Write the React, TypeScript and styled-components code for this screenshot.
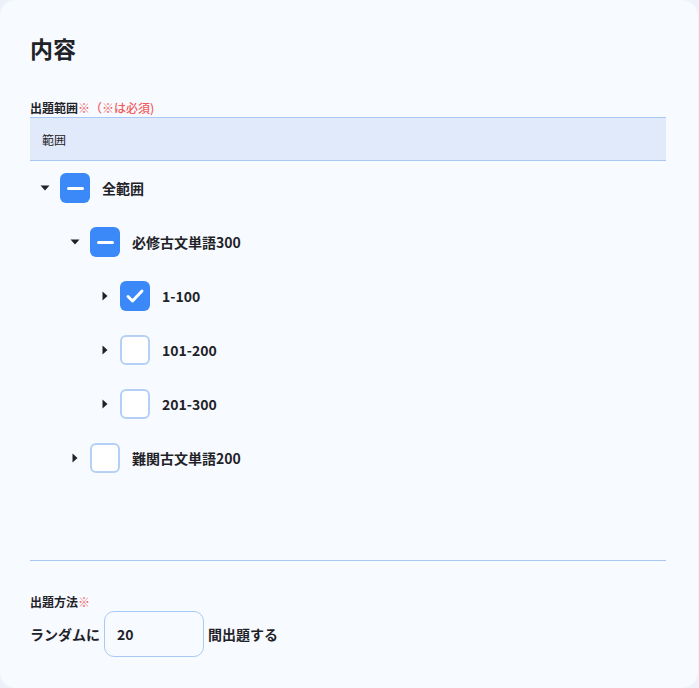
import React from "react";
import styled, { createGlobalStyle } from "styled-components";

const GlobalStyle = createGlobalStyle`
  html, body {
    margin: 0;
    padding: 0;
    background: #edf2fa;
  }
  body {
    font-family: "Noto Sans CJK JP", "Noto Sans", sans-serif;
    color: #1f2328;
  }
`;

const Card = styled.div`
  box-sizing: border-box;
  width: 698px;
  min-height: 688px;
  background: #f7faff;
  border-radius: 16px;
  padding: 30px 32px 0 30px;
`;

const Title = styled.h1`
  margin: 0;
  font-size: 23px;
  line-height: 37px;
  font-weight: 700;
`;

const FieldLabel = styled.div<{ $top: number }>`
  margin-top: ${(p) => p.$top}px;
  font-size: 12px;
  line-height: 18px;
  font-weight: 700;
  height: 18px;
`;

const Required = styled.span`
  color: #f25c5c;
  font-weight: 500;
`;

const TableHead = styled.div`
  box-sizing: border-box;
  height: 44px;
  display: flex;
  align-items: center;
  padding-left: 12px;
  background: #e1eafa;
  border-top: 1px solid #a9c9f5;
  border-bottom: 1px solid #a9c9f5;
  font-size: 12px;
`;

const Tree = styled.div`
  height: 399px;
`;

const Row = styled.div<{ $level: number }>`
  height: 54px;
  display: flex;
  align-items: center;
  padding-left: ${(p) => p.$level * 30}px;
`;

const CaretBox = styled.div`
  width: 30px;
  display: flex;
  justify-content: center;
  align-items: center;
`;

const Box = styled.div<{ $on: boolean }>`
  box-sizing: border-box;
  width: 30px;
  height: 30px;
  border-radius: 6px;
  display: flex;
  align-items: center;
  justify-content: center;
  background: ${(p) => (p.$on ? "#3b88f8" : "#ffffff")};
  border: ${(p) => (p.$on ? "none" : "2px solid #b5d0f5")};
`;

const Dash = styled.div`
  width: 17px;
  height: 3px;
  border-radius: 2px;
  background: #ffffff;
`;

const NodeText = styled.span`
  margin-left: 12px;
  font-size: 14px;
  font-weight: 700;
`;

const Divider = styled.hr`
  margin: 0;
  border: none;
  height: 1px;
  background: #a9c9f5;
`;

const MethodRow = styled.div`
  display: flex;
  align-items: center;
  gap: 4px;
  font-size: 14px;
  font-weight: 700;
`;

const CountInput = styled.div`
  box-sizing: border-box;
  width: 100px;
  height: 46px;
  border: 1px solid #a9c9f5;
  border-radius: 10px;
  background: #f7faff;
  display: flex;
  align-items: center;
  padding-left: 12px;
`;

type State = "all" | "some" | "none";

const Caret = ({ open }: { open: boolean }) => (
  <svg width="10" height="10" viewBox="0 0 10 10">
    {open ? (
      <polygon points="0.5,2.5 9.5,2.5 5,7.5" fill="#1f2328" />
    ) : (
      <polygon points="2.5,0.5 7.5,5 2.5,9.5" fill="#1f2328" />
    )}
  </svg>
);

const Check = ({ state }: { state: State }) => (
  <Box $on={state !== "none"}>
    {state === "some" && <Dash />}
    {state === "all" && (
      <svg width="30" height="30" viewBox="0 0 30 30">
        <polyline
          points="8,15.5 12.5,20 22,10"
          fill="none"
          stroke="#fff"
          strokeWidth="3"
          strokeLinecap="round"
          strokeLinejoin="round"
        />
      </svg>
    )}
  </Box>
);

const nodes: { level: number; open: boolean; state: State; label: string }[] = [
  { level: 0, open: true, state: "some", label: "全範囲" },
  { level: 1, open: true, state: "some", label: "必修古文単語300" },
  { level: 2, open: false, state: "all", label: "1-100" },
  { level: 2, open: false, state: "none", label: "101-200" },
  { level: 2, open: false, state: "none", label: "201-300" },
  { level: 1, open: false, state: "none", label: "難関古文単語200" },
];

export default function App() {
  return (
    <>
      <GlobalStyle />
      <Card>
        <Title>内容</Title>
        <FieldLabel $top={32}>
          出題範囲<Required>※（※は必須)</Required>
        </FieldLabel>
        <TableHead>範囲</TableHead>
        <Tree>
          {nodes.map((n) => (
            <Row key={n.label} $level={n.level}>
              <CaretBox>
                <Caret open={n.open} />
              </CaretBox>
              <Check state={n.state} />
              <NodeText>{n.label}</NodeText>
            </Row>
          ))}
        </Tree>
        <Divider />
        <FieldLabel $top={32}>
          出題方法<Required>※</Required>
        </FieldLabel>
        <MethodRow>
          <span>ランダムに</span>
          <CountInput>20</CountInput>
          <span>間出題する</span>
        </MethodRow>
      </Card>
    </>
  );
}
